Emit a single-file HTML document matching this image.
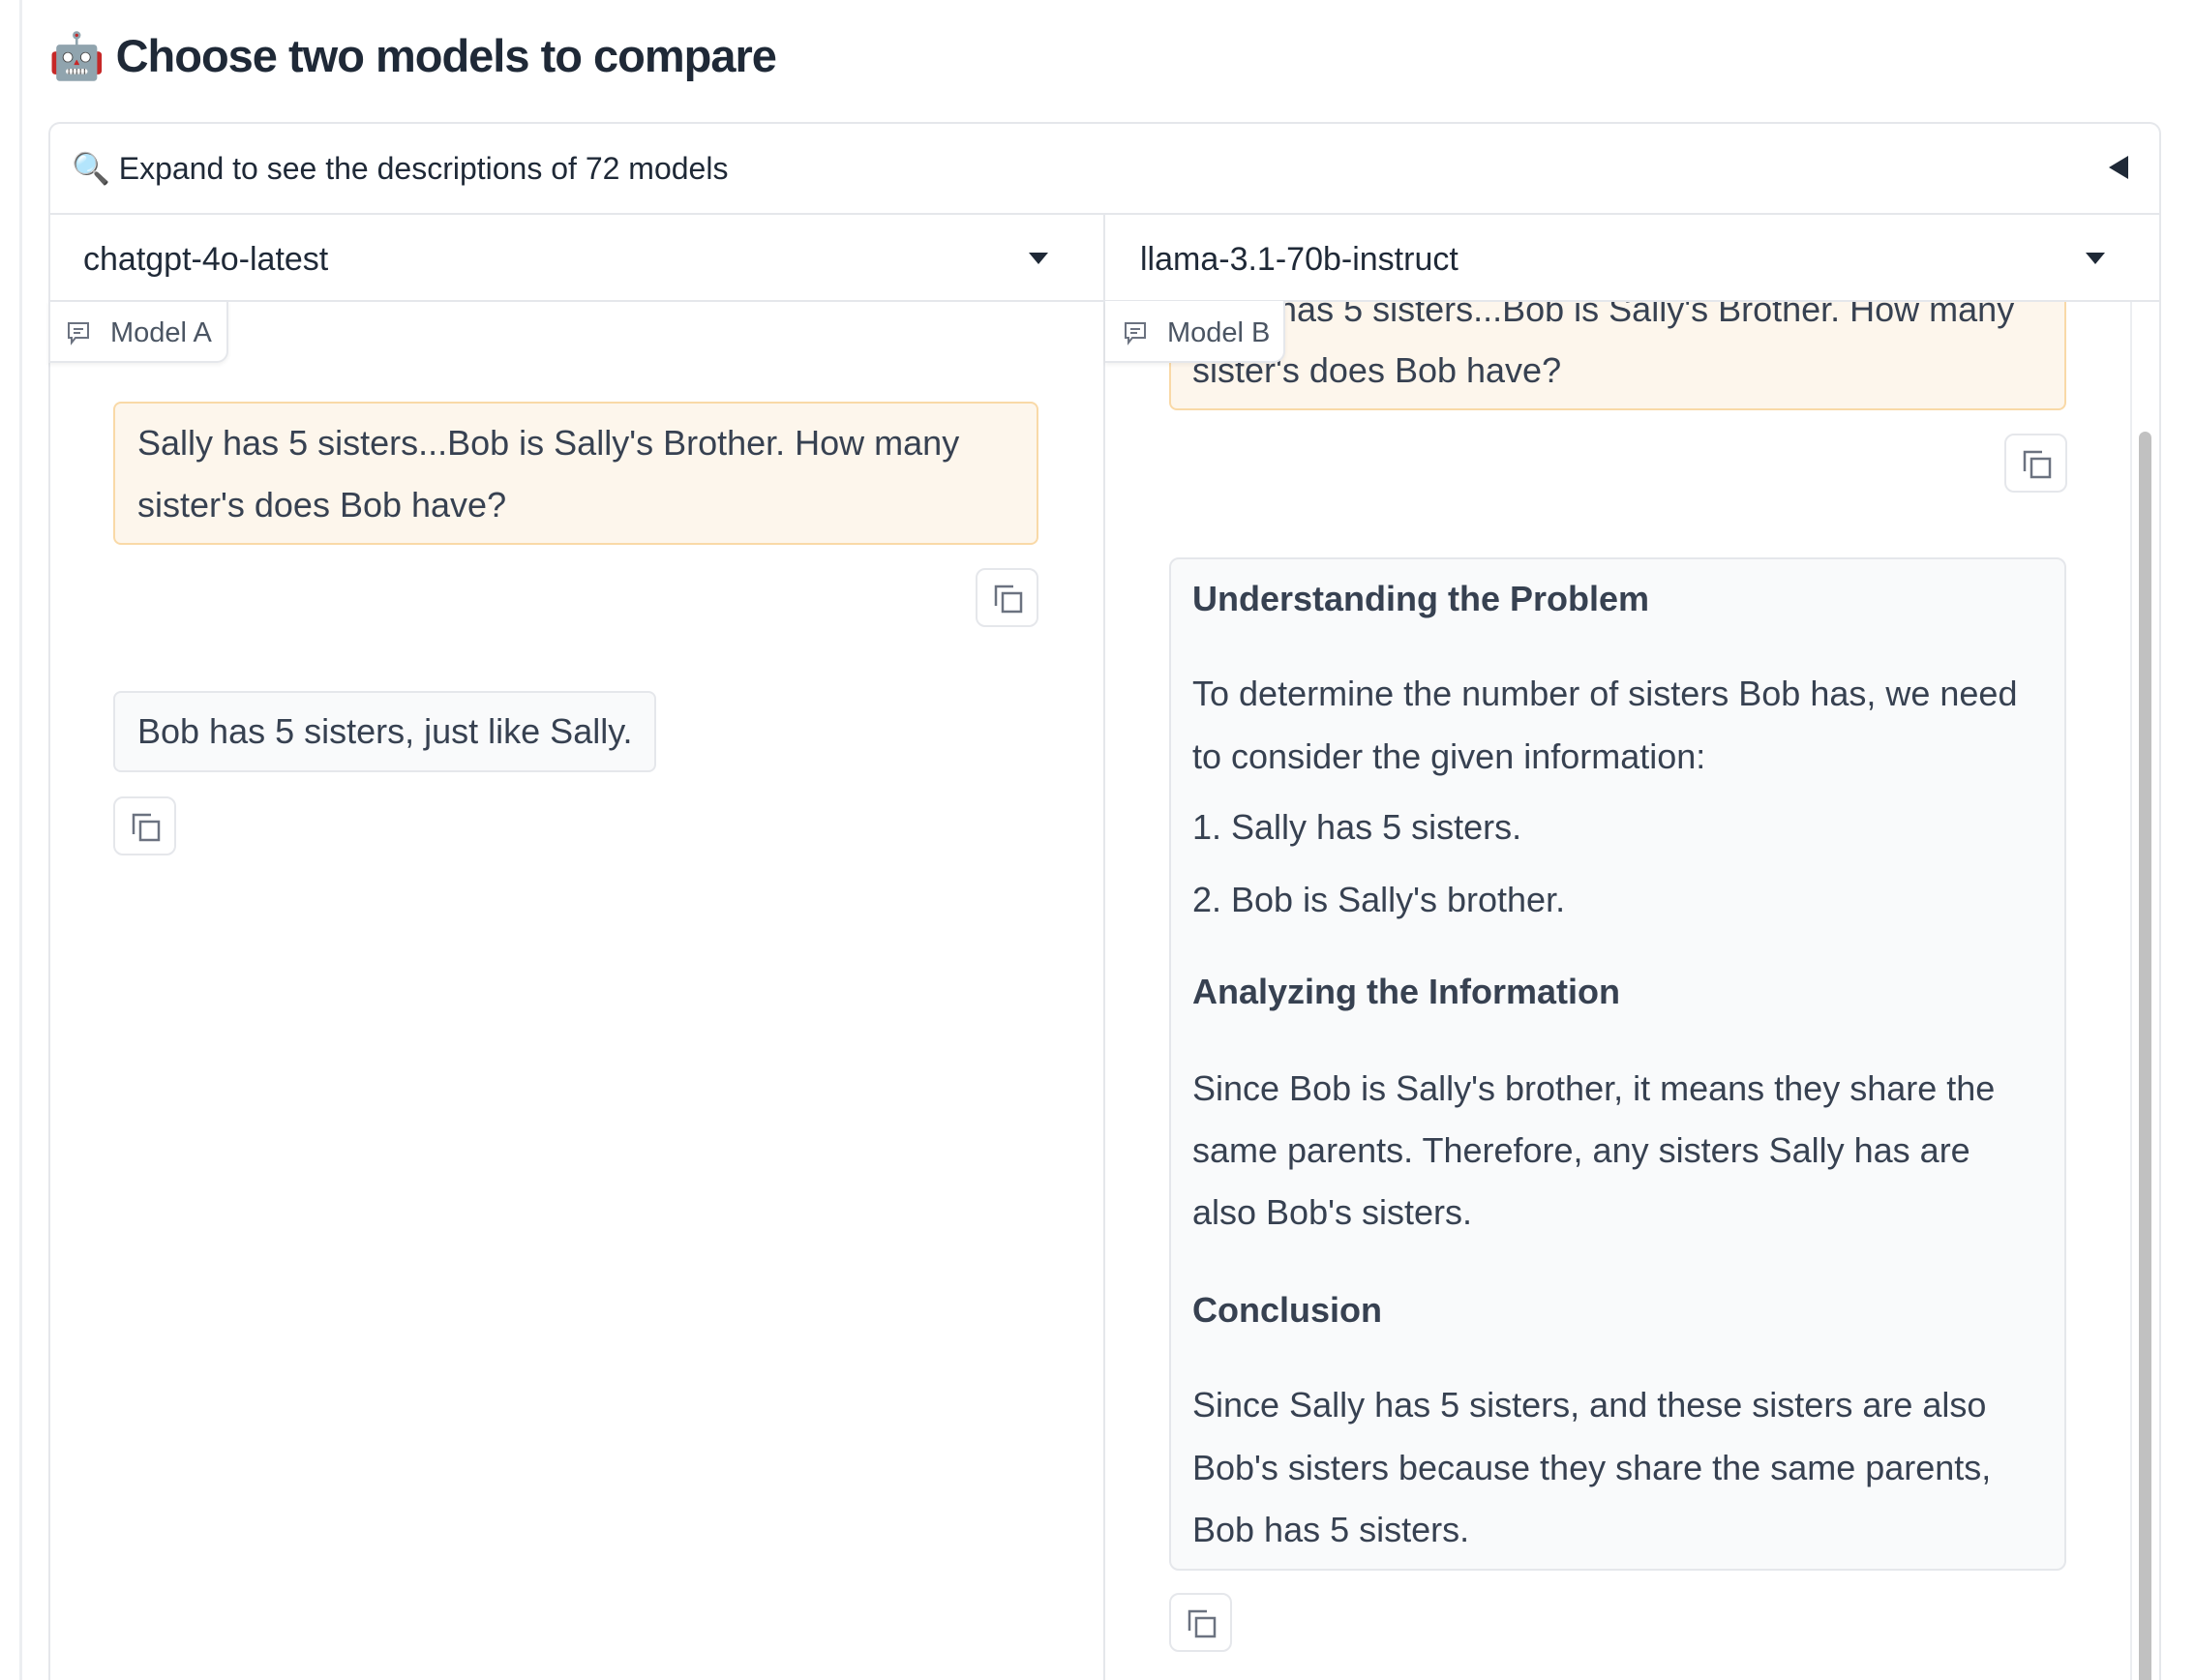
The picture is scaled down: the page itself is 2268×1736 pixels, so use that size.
<!DOCTYPE html>
<html style="width:2268px;height:1736px;overflow:hidden"><head><meta charset="utf-8"><style>
*{margin:0;padding:0;box-sizing:border-box}
body{width:2268px;height:1736px;background:#fff;position:relative;overflow:hidden;font-family:"Liberation Sans",sans-serif;color:#374151}
.a{position:absolute;white-space:nowrap}
.t{font-size:36px;line-height:40px}
.b{font-weight:bold}
.copy{position:absolute;width:65px;height:61px;border:2px solid #e5e7eb;border-radius:10px;background:#fff}
.copy svg{position:absolute;left:17px;top:15px}
</style></head><body>
<div class="a" style="left:20px;top:0;width:3px;height:1736px;background:#eceef1"></div>
<div class="a b" style="left:50px;top:30px;font-size:47px;line-height:56px;color:#1f2937;letter-spacing:-1px">🤖 Choose two models to compare</div>
<div class="a" style="left:50px;top:126px;width:2183px;height:1610px;border:2px solid #e5e7eb;border-bottom:none;border-radius:12px 12px 0 0"></div>
<div class="a" style="left:74px;top:154px;font-size:32px;line-height:40px;color:#1f2937">🔍 Expand to see the descriptions of 72 models</div>
<svg class="a" style="left:2177px;top:160px" width="24" height="26"><path d="M22 1 L2 13 L22 25Z" fill="#1f2937"/></svg>
<div class="a" style="left:50px;top:220px;width:2183px;height:2px;background:#e5e7eb"></div>
<div class="a" style="left:50px;top:310px;width:2183px;height:2px;background:#e5e7eb"></div>
<div class="a" style="left:1140px;top:220px;width:2px;height:1516px;background:#e5e7eb"></div>
<div class="a" style="left:86px;top:248px;font-size:34px;line-height:40px;color:#1f2937">chatgpt-4o-latest</div>
<svg class="a" style="left:1063px;top:261px" width="20" height="12"><path d="M0 0H20L10 12Z" fill="#1f2937"/></svg>
<div class="a" style="left:1178px;top:248px;font-size:34px;line-height:40px;color:#1f2937">llama-3.1-70b-instruct</div>
<svg class="a" style="left:2155px;top:261px" width="20" height="12"><path d="M0 0H20L10 12Z" fill="#1f2937"/></svg>

<div class="a" style="left:50px;top:311px;width:186px;height:64px;border:2px solid #e5e7eb;border-top:none;border-left:none;border-radius:0 0 12px 0;box-shadow:0 2px 4px rgba(0,0,0,.06)"></div>
<svg class="a" style="left:68px;top:331px" width="26" height="26" fill="none" stroke="#6b7280" stroke-width="2"><path d="M3 3H23V18H10L6 23V18H3Z"/><path d="M8 9H18M8 13H15"/></svg>
<div class="a" style="left:114px;top:326px;font-size:29px;line-height:36px;color:#4b5563">Model A</div>
<div class="a" style="left:117px;top:415px;width:956px;height:148px;background:#fdf6ec;border:2px solid #f9d9a7;border-radius:8px"></div>
<div class="a t" style="left:142px;top:438px">Sally has 5 sisters...Bob is Sally's Brother. How many</div>
<div class="a t" style="left:142px;top:502px">sister's does Bob have?</div>
<div class="copy" style="left:1008px;top:587px"><svg width="30" height="30" fill="none" stroke="#6b7280" stroke-width="2.5"><path d="M2 22V2H20"/><rect x="9" y="9" width="19" height="19"/></svg></div>
<div class="a" style="left:117px;top:714px;width:561px;height:84px;background:#f9fafb;border:2px solid #e5e7eb;border-radius:8px"></div>
<div class="a t" style="left:142px;top:736px">Bob has 5 sisters, just like Sally.</div>
<div class="copy" style="left:117px;top:823px"><svg width="30" height="30" fill="none" stroke="#6b7280" stroke-width="2.5"><path d="M2 22V2H20"/><rect x="9" y="9" width="19" height="19"/></svg></div>

<div class="a" style="left:1142px;top:312px;width:1060px;height:1424px;overflow:hidden">
  <div class="a" style="left:66px;top:-60px;width:927px;height:172px;background:#fdf6ec;border:2px solid #f9d9a7;border-radius:8px"></div>
  <div class="a t" style="left:90px;top:-12px">Sally has 5 sisters...Bob is Sally's Brother. How many</div>
  <div class="a t" style="left:90px;top:51px">sister's does Bob have?</div>
</div>
<div class="a" style="left:1142px;top:311px;width:186px;height:64px;background:#fff;border:2px solid #e5e7eb;border-top:none;border-left:none;border-radius:0 0 12px 0;box-shadow:0 2px 4px rgba(0,0,0,.06)"></div>
<svg class="a" style="left:1160px;top:331px" width="26" height="26" fill="none" stroke="#6b7280" stroke-width="2"><path d="M3 3H23V18H10L6 23V18H3Z"/><path d="M8 9H18M8 13H15"/></svg>
<div class="a" style="left:1206px;top:326px;font-size:29px;line-height:36px;color:#4b5563">Model B</div>
<div class="copy" style="left:2071px;top:448px"><svg width="30" height="30" fill="none" stroke="#6b7280" stroke-width="2.5"><path d="M2 22V2H20"/><rect x="9" y="9" width="19" height="19"/></svg></div>
<div class="a" style="left:1208px;top:576px;width:927px;height:1047px;background:#f9fafb;border:2px solid #e5e7eb;border-radius:10px"></div>
<div class="a t b" style="left:1232px;top:599px">Understanding the Problem</div>
<div class="a t" style="left:1232px;top:697px">To determine the number of sisters Bob has, we need</div>
<div class="a t" style="left:1232px;top:762px">to consider the given information:</div>
<div class="a t" style="left:1232px;top:835px">1. Sally has 5 sisters.</div>
<div class="a t" style="left:1232px;top:910px">2. Bob is Sally's brother.</div>
<div class="a t b" style="left:1232px;top:1005px">Analyzing the Information</div>
<div class="a t" style="left:1232px;top:1105px">Since Bob is Sally's brother, it means they share the</div>
<div class="a t" style="left:1232px;top:1169px">same parents. Therefore, any sisters Sally has are</div>
<div class="a t" style="left:1232px;top:1233px">also Bob's sisters.</div>
<div class="a t b" style="left:1232px;top:1334px">Conclusion</div>
<div class="a t" style="left:1232px;top:1432px">Since Sally has 5 sisters, and these sisters are also</div>
<div class="a t" style="left:1232px;top:1497px">Bob's sisters because they share the same parents,</div>
<div class="a t" style="left:1232px;top:1561px">Bob has 5 sisters.</div>
<div class="copy" style="left:1208px;top:1646px"><svg width="30" height="30" fill="none" stroke="#6b7280" stroke-width="2.5"><path d="M2 22V2H20"/><rect x="9" y="9" width="19" height="19"/></svg></div>
<div class="a" style="left:2201px;top:312px;width:2px;height:1424px;background:#eceef1"></div>
<div class="a" style="left:2210px;top:446px;width:13px;height:1290px;background:#c1c1c1;border-radius:7px 7px 0 0"></div>
</body></html>
